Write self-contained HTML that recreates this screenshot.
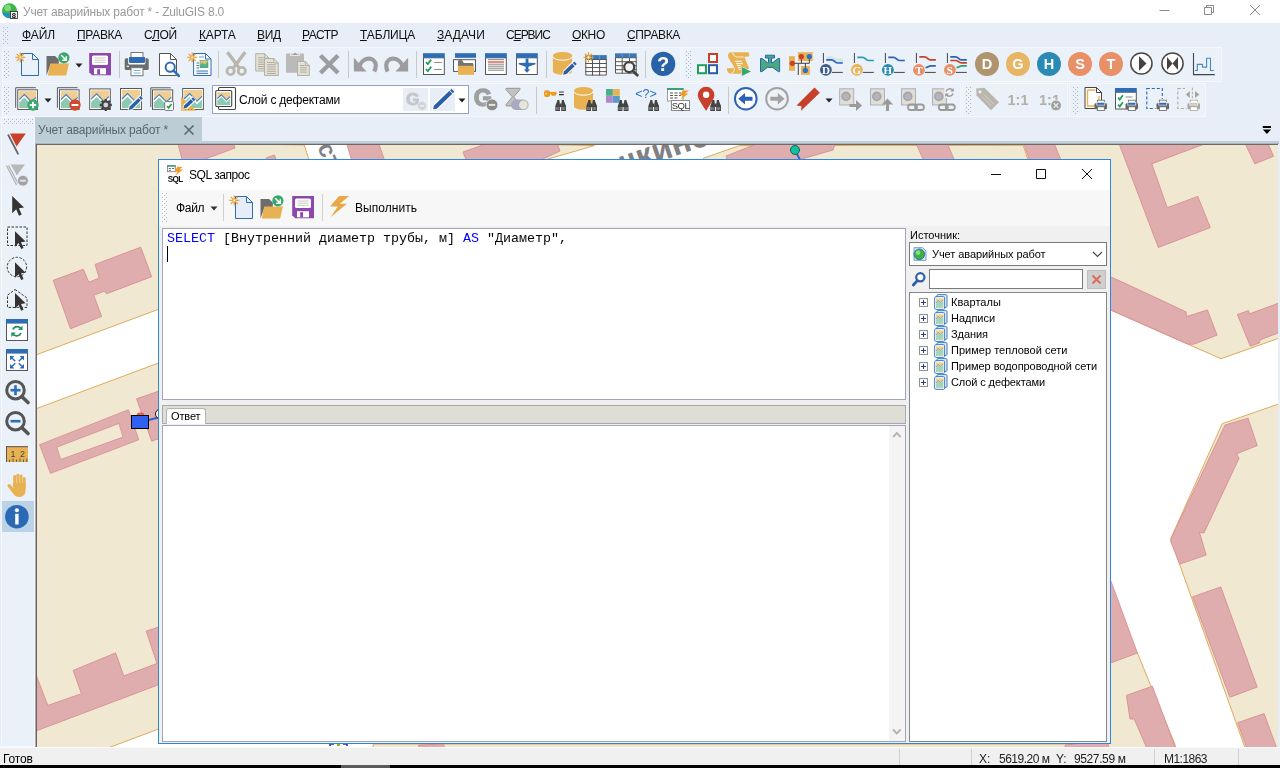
<!DOCTYPE html>
<html lang="ru"><head><meta charset="utf-8"><title>Учет аварийных работ * - ZuluGIS 8.0</title>
<style>
html,body{margin:0;padding:0;}
body{width:1280px;height:768px;overflow:hidden;position:relative;background:#e8eef7;font-family:"Liberation Sans",sans-serif;font-size:12px;color:#000;}
.a{position:absolute;}
.t{position:absolute;white-space:pre;line-height:16px;height:16px;will-change:transform;}
.panel{position:absolute;background:#ebf1f8;border:1px solid #f4f7fb;box-sizing:border-box;}
.grip{position:absolute;background-image:radial-gradient(circle at 0.5px 0.5px,#aeb7c3 0.55px,transparent 0.75px),radial-gradient(circle at 0.5px 0.5px,#aeb7c3 0.55px,transparent 0.75px);background-size:4px 4px,4px 4px;background-position:0 0,2px 2px;}
.sep{position:absolute;width:1px;background:#c8c8c6;}
.ic{position:absolute;width:24px;height:24px;overflow:visible;will-change:transform;}
.mono{font-family:"Liberation Mono",monospace;font-size:13.33px;}
.ms{font-family:"Liberation Sans",sans-serif;font-size:11px;}
u{text-decoration:underline;text-underline-offset:1px;}
</style></head>
<body>
<div class="a" style="left:0;top:0;width:1280px;height:23px;background:#fff"></div>
<svg class="ic" style="left:2px;top:3px;width:16px;height:16px" viewBox="0 0 24 24"><circle cx="11.300" cy="11.500" r="11.200" fill="#3cb44a"/><path d="M0.300 13a11.200 11.200 0 0 0 13 9.600v-7.600q-6 2-13-2z" fill="#2a8ad0"/><circle cx="8.500" cy="7.500" r="5" fill="#9ae88a" opacity="0.700"/><rect x="12.700" y="12.700" width="10.600" height="10.600" fill="#f4f4f4" stroke="#333" stroke-width="1.300"/><text x="18" y="22.300" text-anchor="middle" font-family="Liberation Sans, sans-serif" font-weight="bold" font-size="11.500" fill="#111">8</text></svg>
<div class="t " style="left:23px;top:3.5px;letter-spacing:-0.196px;color:#999;">Учет аварийных работ * - ZuluGIS 8.0</div>
<svg class="a" style="left:1150px;top:0" width="130" height="23" viewBox="0 0 130 23"><g fill="none" stroke="#8a8a8a" stroke-width="1"><path d="M9.500 10.500h10"/><path d="M54.500 7.500h7v7h-7z M56.500 7.500v-2h7v7h-2"/><path d="M100 5l10 10M110 5l-10 10"/></g></svg>
<div class="a" style="left:0;top:23px;width:1280px;height:24px;background:#e8eef7"></div>
<div class="grip" style="left:3px;top:27px;width:5px;height:17px"></div>
<div class="t " style="left:22.0px;top:26.5px;letter-spacing:-0.044px;color:#111;"><u>Ф</u>АЙЛ</div>
<div class="t " style="left:76.8px;top:26.5px;letter-spacing:-0.305px;color:#111;"><u>П</u>РАВКА</div>
<div class="t " style="left:144.3px;top:26.5px;letter-spacing:-0.302px;color:#111;">С<u>Л</u>ОЙ</div>
<div class="t " style="left:198.5px;top:26.5px;letter-spacing:-0.141px;color:#111;"><u>К</u>АРТА</div>
<div class="t " style="left:256.8px;top:26.5px;letter-spacing:-0.289px;color:#111;"><u>В</u>ИД</div>
<div class="t " style="left:301.8px;top:26.5px;letter-spacing:-0.509px;color:#111;"><u>Р</u>АСТР</div>
<div class="t " style="left:359.7px;top:26.5px;letter-spacing:-0.143px;color:#111;"><u>Т</u>АБЛИЦА</div>
<div class="t " style="left:436.5px;top:26.5px;letter-spacing:0.055px;color:#111;"><u>З</u>АДАЧИ</div>
<div class="t " style="left:506.0px;top:26.5px;letter-spacing:-1.028px;color:#111;">С<u>Е</u>РВИС</div>
<div class="t " style="left:571.8px;top:26.5px;letter-spacing:-0.357px;color:#111;"><u>О</u>КНО</div>
<div class="t " style="left:626.9px;top:26.5px;letter-spacing:-0.371px;color:#111;"><u>С</u>ПРАВКА</div>
<div class="panel" style="left:2px;top:47px;width:679px;height:35px"></div>
<div class="panel" style="left:682px;top:47px;width:540px;height:35px"></div>
<div class="panel" style="left:2px;top:83px;width:959px;height:34px"></div>
<div class="panel" style="left:962px;top:83px;width:106px;height:34px"></div>
<div class="panel" style="left:1069px;top:83px;width:137px;height:34px"></div>
<div class="grip" style="left:4px;top:51px;width:5px;height:27px"></div>
<div class="grip" style="left:686px;top:51px;width:5px;height:27px"></div>
<div class="grip" style="left:4px;top:87px;width:5px;height:27px"></div>
<div class="grip" style="left:966px;top:87px;width:5px;height:27px"></div>
<div class="grip" style="left:1073px;top:87px;width:5px;height:27px"></div>
<svg class="ic" style="left:15px;top:52px;width:24px;height:24px" viewBox="0 0 24 24"><path d="M6.5 1.5H17.5L23.5 7.5V23.5H6.5Z" fill="none" stroke="#2e6db4" stroke-width="1" stroke-linejoin="round"/><path d="M17.5 1.5V7.5H23.5" fill="none" stroke="#2e6db4" stroke-width="1"/><path d="M0.30 5.40L10.30 5.40M1.76 1.86L8.84 8.94M5.30 0.40L5.30 10.40M8.84 1.86L1.76 8.94" stroke="#eba53a" stroke-width="1.3" fill="none"/><circle cx="5.3" cy="5.4" r="1.300" fill="#fff" stroke="#eba53a" stroke-width="0.800"/></svg>
<svg class="ic" style="left:46px;top:52px;width:24px;height:24px" viewBox="0 0 24 24"><path d="M0.500 4h8.500l3.800 3.500v4.500h-8l-4.300 11.500z" fill="#6d6d6d"/><path d="M4.300 11.500h18.600l-2.700 12.100h-18.400z" fill="#e8b252"/><circle cx="17.900" cy="5.800" r="5.600" fill="#3aa76d"/><path d="M15.300 3.300l4.600 4.600M20.300 4.300v4h-4" stroke="#fff" stroke-width="1.500" fill="none"/></svg>
<svg class="ic" style="left:87px;top:52px;width:24px;height:24px" viewBox="0 0 24 24"><path d="M2.200 1h21.800v22.200h-18.800l-3-3z" fill="#8d48ac"/><rect x="5" y="3.500" width="16" height="9.500" rx="1.500" fill="#fff"/><path d="M7.500 6h11M7.500 8.200h11M7.500 10.400h11" stroke="#c4c2b8" stroke-width="0.900"/><path d="M7 16.200h12v6.100h-12z" fill="#fff"/><rect x="10.200" y="17.200" width="2.800" height="5.100" fill="#8d48ac"/></svg>
<svg class="ic" style="left:124px;top:52px;width:24px;height:24px" viewBox="0 0 24 24"><rect x="0.700" y="6.300" width="24" height="11.800" rx="1.500" fill="#6b6d6d"/><rect x="7" y="0.500" width="12" height="6" fill="#fff" stroke="#777" stroke-width="1"/><path d="M4.200 5h17.200v6a1.500 1.500 0 0 1-1.500 1.500h-14.200a1.500 1.500 0 0 1-1.500-1.500z" fill="#fff"/><path d="M5 5h16v4.500a1.500 1.500 0 0 1-1.500 1.500h-13a1.500 1.500 0 0 1-1.500-1.500z" fill="#2e6db4"/><rect x="2.500" y="13.800" width="2.500" height="1" fill="#fff"/><rect x="7" y="15.700" width="12" height="8" fill="#fff" stroke="#777" stroke-width="1"/><path d="M9.500 18.500h7M9.500 21h7" stroke="#7ab4dc" stroke-width="1"/></svg>
<svg class="ic" style="left:156px;top:52px;width:24px;height:24px" viewBox="0 0 24 24"><path d="M3.5 1.5H14.5L20.5 7.5V23.5H3.5Z" fill="#fff" stroke="#555" stroke-width="1" stroke-linejoin="round"/><path d="M14.5 1.5V7.5H20.5" fill="none" stroke="#555" stroke-width="1"/><circle cx="14.200" cy="15.200" r="4.600" fill="#fff" stroke="#2e6db4" stroke-width="2"/><path d="M17.600 18.600l5.200 5.200" stroke="#2e6db4" stroke-width="2.600" stroke-linecap="round"/></svg>
<svg class="ic" style="left:188px;top:52px;width:24px;height:24px" viewBox="0 0 24 24"><path d="M5.6 1.5H17.5L23 7.0V23.5H5.6Z" fill="#fff" stroke="#2e6db4" stroke-width="1" stroke-linejoin="round"/><path d="M17.5 1.5V7.0H23" fill="none" stroke="#2e6db4" stroke-width="1"/><path d="M11 5h5" stroke="#9cc4ea" stroke-width="1.600"/><rect x="12" y="8.200" width="8" height="7.500" fill="#f0c070"/><path d="M12 13l2.500-2.500 2 2 3.500-3v6.200h-8z" fill="#5ab08a"/><rect x="12" y="8.200" width="8" height="7.500" fill="none" stroke="#3aa76d" stroke-width="0.600"/><path d="M8.500 11h2.500M8.500 13.500h2.500M8.500 16h2.500M8.500 19h11.500M8.500 21.300h11.500" stroke="#2e6db4" stroke-width="1"/><path d="M-0.80 5.40L9.20 5.40M0.66 1.86L7.74 8.94M4.20 0.40L4.20 10.40M7.74 1.86L0.66 8.94" stroke="#eba53a" stroke-width="1.3" fill="none"/><circle cx="4.2" cy="5.4" r="1.300" fill="#fff" stroke="#eba53a" stroke-width="0.800"/></svg>
<svg class="ic" style="left:223px;top:52px;width:24px;height:24px" viewBox="0 0 24 24"><path d="M4.300 0.300L17 17M22.300 0.300L9.500 17" stroke="#b9b7ae" stroke-width="3.200" fill="none"/><path d="M4.300 0.300l2.400 0 8.500 12-2.300 2.500zM22.300 0.300l-2.400 0-8.500 12 2.300 2.500z" fill="#b9b7ae"/><circle cx="7.600" cy="19" r="3.600" fill="none" stroke="#b9b7ae" stroke-width="2.800"/><circle cx="18.800" cy="19" r="3.600" fill="none" stroke="#b9b7ae" stroke-width="2.800"/></svg>
<svg class="ic" style="left:254px;top:52px;width:24px;height:24px" viewBox="0 0 24 24"><path d="M1.7 1.7H10.7L15.2 6.2V19H1.7Z" fill="#e3e1d6" stroke="#b3b0a6" stroke-width="1" stroke-linejoin="round"/><path d="M10.7 1.7V6.2H15.2" fill="none" stroke="#b3b0a6" stroke-width="1"/><path d="M4.2 5.7H9.7M4.2 7.9H12.7M4.2 10.1H12.7M4.2 12.3H12.7M4.2 14.5H12.7M4.2 16.7H12.7" stroke="#aeaba0" stroke-width="1"/><path d="M10.5 6.5H19.8L24.3 11.0V23.5H10.5Z" fill="#e3e1d6" stroke="#b3b0a6" stroke-width="1" stroke-linejoin="round"/><path d="M19.8 6.5V11.0H24.3" fill="none" stroke="#b3b0a6" stroke-width="1"/><path d="M13.0 10.5H18.8M13.0 12.7H21.8M13.0 14.9H21.8M13.0 17.1H21.8M13.0 19.3H21.8M13.0 21.5H21.8" stroke="#aeaba0" stroke-width="1"/></svg>
<svg class="ic" style="left:285px;top:52px;width:24px;height:24px" viewBox="0 0 24 24"><rect x="1" y="1.500" width="18" height="19.300" rx="1" fill="#bababa"/><path d="M5.500 3.500h9v-1.500h-2.300a2.200 1.800 0 0 0-4.400 0h-2.300z" fill="#a5a49c" stroke="#fff" stroke-width="0.700"/><path d="M12.5 9.5H20.3L24.3 13.5V23.5H12.5Z" fill="#e3e1d6" stroke="#b3b0a6" stroke-width="1" stroke-linejoin="round"/><path d="M20.3 9.5V13.5H24.3" fill="none" stroke="#b3b0a6" stroke-width="1"/><path d="M15.0 13.5H19.3M15.0 15.7H21.8M15.0 17.9H21.8M15.0 20.1H21.8" stroke="#aeaba0" stroke-width="1"/></svg>
<svg class="ic" style="left:316px;top:52px;width:24px;height:24px" viewBox="0 0 24 24"><path d="M4.500 3.500L22 21M22 3.500L4.500 21" stroke="#9d9ca1" stroke-width="4.400" fill="none"/></svg>
<svg class="ic" style="left:353px;top:52px;width:24px;height:24px" viewBox="0 0 24 24"><path d="M0.900 5.800V19.400H13.500Z" fill="#9d9ca1"/><path d="M6.500 14.500C9 4.500 22.500 4 22.800 13.500C22.800 16 22 18 21.300 19.500" fill="none" stroke="#9d9ca1" stroke-width="4.200"/></svg>
<svg class="ic" style="left:385px;top:52px;width:24px;height:24px" viewBox="0 0 24 24"><g transform="translate(24,0) scale(-1,1)"><path d="M0.900 5.800V19.400H13.500Z" fill="#9d9ca1"/><path d="M6.500 14.500C9 4.500 22.500 4 22.800 13.500C22.800 16 22 18 21.300 19.500" fill="none" stroke="#9d9ca1" stroke-width="4.200"/></g></svg>
<svg class="ic" style="left:421px;top:52px;width:24px;height:24px" viewBox="0 0 24 24"><rect x="2.5" y="5.8" width="20.8" height="16.700000000000003" fill="#fff" stroke="#555" stroke-width="1"/><rect x="2" y="1.2" width="21.8" height="4.6" fill="#2e6db4"/><path d="M5.00 10.20l1.80 2.00l3.40 -4.60" fill="none" stroke="#1f9f5c" stroke-width="1.8"/><path d="M5.00 17.20l1.80 2.00l3.40 -4.60" fill="none" stroke="#1f9f5c" stroke-width="1.8"/><path d="M13.200 10.500h7.500M13.200 17.500h7.500" stroke="#8a8a8a" stroke-width="1"/></svg>
<svg class="ic" style="left:452px;top:52px;width:24px;height:24px" viewBox="0 0 24 24"><rect x="3" y="1.200" width="21" height="4.600" fill="#2e6db4"/><rect x="1.500" y="7.700" width="22" height="11.700" fill="#fff" stroke="#555" stroke-width="1"/><path d="M6 14V9.500q0-1.500 1.500-1.500h1.500q1.200 0 1.800 1.200l1 1.800h8.500q1.200 0 1.200 1.200v2z" fill="#75756f"/><rect x="6" y="13.800" width="16" height="9" fill="#e8b252"/></svg>
<svg class="ic" style="left:483px;top:52px;width:24px;height:24px" viewBox="0 0 24 24"><rect x="2.5" y="5.8" width="20.8" height="16.700000000000003" fill="#fff" stroke="#555" stroke-width="1"/><rect x="2" y="1.2" width="21.8" height="4.6" fill="#2e6db4"/><path d="M5 7.700h16M5 12.200h16M5 14.200h16M5 16.200h16M5 18.200h16" stroke="#777" stroke-width="0.900"/><path d="M5 10h16" stroke="#d0402a" stroke-width="1.200"/></svg>
<svg class="ic" style="left:514px;top:52px;width:24px;height:24px" viewBox="0 0 24 24"><rect x="2.5" y="5.8" width="20.8" height="16.700000000000003" fill="#fff" stroke="#555" stroke-width="1"/><rect x="2" y="1.2" width="21.8" height="4.6" fill="#2e6db4"/><path d="M11.600 6.500h2.800v4.200l7 0.300v1.200l-7 2.500v2.800h1.800l-3.200 3.300l-3.200-3.300h1.800v-2.800l-7-2.500v-1.200l7-0.300z" fill="#2e6db4"/></svg>
<svg class="ic" style="left:551px;top:52px;width:24px;height:24px" viewBox="0 0 24 24"><path d="M1.9 3.6V19.2a9.600000000000001 3.6 0 0 0 19.200000000000003 0V3.6a9.600000000000001 3.6 0 0 0 -19.200000000000003 0z" fill="#e8b252"/><path d="M1.9 4.6a9.600000000000001 3.6 0 0 0 19.200000000000003 0" fill="none" stroke="#fff" stroke-width="1"/><path d="M10.91 23.83L16.39 22.77L27.03 12.63L22.89 8.28L12.25 18.42Z" fill="#fff" opacity="0.85"/><path d="M12.00 22.80L15.56 21.90L23.67 14.17L21.19 11.57L13.08 19.29Z" fill="#2a5fa8"/><path d="M24.25 13.62L25.84 12.10L23.36 9.50L21.77 11.01Z" fill="#2a5fa8"/></svg>
<svg class="ic" style="left:583px;top:52px;width:24px;height:24px" viewBox="0 0 24 24"><rect x="2.3" y="3.1" width="21.5" height="20.5" fill="#fff"/><rect x="2.3" y="3.1" width="21.5" height="4.4" fill="#3a78bc"/><path d="M2.8 7.5V23.1H23.3V7.5M9.5 7.5V23.6M16.6 7.5V23.6M2.3 7.5H23.8M2.3 11.5H23.8M2.3 15.6H23.8M2.3 19.6H23.8" fill="none" stroke="#555" stroke-width="1"/><path d="M9.5 3.1V7.5M16.6 3.1V7.5" stroke="#6a9fd8" stroke-width="0.800"/><path d="M0.50 5.30L10.50 5.30M1.96 1.76L9.04 8.84M5.50 0.30L5.50 10.30M9.04 1.76L1.96 8.84" stroke="#eba53a" stroke-width="1.3" fill="none"/><circle cx="5.5" cy="5.3" r="1.300" fill="#fff" stroke="#eba53a" stroke-width="0.800"/></svg>
<svg class="ic" style="left:614px;top:52px;width:24px;height:24px" viewBox="0 0 24 24"><rect x="1" y="1.3" width="21.7" height="20.4" fill="#fff"/><rect x="1" y="1.3" width="21.7" height="4.4" fill="#3a78bc"/><path d="M1.5 5.7V21.2H22.2V5.7M8.2 5.7V21.7M15.5 5.7V21.7M1 5.7H22.7M1 9.7H22.7M1 13.7H22.7M1 17.7H22.7" fill="none" stroke="#555" stroke-width="1"/><path d="M8.2 1.3V5.7M15.5 1.3V5.7" stroke="#6a9fd8" stroke-width="0.800"/><circle cx="15.200" cy="15.100" r="5" fill="#f4f4f4" stroke="#444" stroke-width="2.200"/><path d="M19 19l4.300 4.300" stroke="#444" stroke-width="2.800" stroke-linecap="round"/></svg>
<svg class="ic" style="left:650px;top:52px;width:24px;height:24px" viewBox="0 0 24 24"><circle cx="13.200" cy="11.900" r="12.100" fill="#2a62a8"/><text x="13.200" y="19" text-anchor="middle" font-family="Liberation Sans, sans-serif" font-weight="bold" font-size="20" fill="#fff">?</text></svg>
<svg class="ic" style="left:695px;top:52px;width:24px;height:24px" viewBox="0 0 24 24"><rect x="14" y="2" width="8" height="8" fill="#fff" stroke="#c8402a" stroke-width="2"/><rect x="3" y="13.200" width="8" height="8" fill="#fff" stroke="#1f9f5c" stroke-width="2"/><rect x="14" y="13.200" width="8" height="8" fill="#fff" stroke="#2a5fa8" stroke-width="2"/></svg>
<svg class="ic" style="left:726px;top:52px;width:24px;height:24px" viewBox="0 0 24 24"><path d="M4.500 0.300H21.500Q23.400 0.300 23.200 2.500L23.100 4.600L18.300 4.800L23.100 16.200L14.500 21.700H5.600Q1.200 21.700 1 17.300V16.200H8.750L2.300 5.500Q1.200 1 4.500 0.300Z" fill="#e8b252"/><path d="M6.100 0.300Q8 4.800 10.500 5H17.800M8.750 16.400Q8 20.500 5.300 21.600" fill="none" stroke="#fff" stroke-width="0.800"/><path d="M9 9.300h7M10 11.700h7M11.100 13.600h3.500M12 15.600h2.500M12.500 17.500h2" stroke="#fff" stroke-width="1"/><path d="M15.400 14.300l10.200 5.100l-10.200 5.100z" fill="#ebf1f8"/><path d="M15.900 15.100l9.100 4.300l-9.100 4.500z" fill="#3aa76d"/></svg>
<svg class="ic" style="left:757px;top:52px;width:24px;height:24px" viewBox="0 0 24 24"><path d="M3.500 6.500H5L10.400 10.500H15.800L21.200 6.500H22.600V19.600H21.200L15.800 15.400H10.400L5 19.600H3.500Z" fill="#4aaa7c" stroke="#2a62b8" stroke-width="1"/><path d="M8.500 3.200h9v2.800h-3v4.800h-3v-4.800h-3z" fill="#4aaa7c" stroke="#2a62b8" stroke-width="1"/><rect x="12.050" y="6" width="1.900" height="6" fill="#4aaa7c"/></svg>
<svg class="ic" style="left:788px;top:52px;width:24px;height:24px" viewBox="0 0 24 24"><rect x="1" y="4.200" width="6" height="14.600" fill="#e8b252"/><rect x="10" y="0.200" width="14.700" height="8.800" fill="#e8b252"/><rect x="13" y="14" width="8.800" height="8.800" fill="#e8b252"/><path d="M4.300 11.300H21.300V4.500M10.300 11.300V23M13.400 4.500V11.300M17.400 11.300V18.400" fill="none" stroke="#444" stroke-width="1"/><circle cx="4.300" cy="11.300" r="2.600" fill="#c8402a"/><circle cx="13.400" cy="4.500" r="2.600" fill="#c8402a"/><circle cx="21.300" cy="4.500" r="2.600" fill="#2a72c8"/><circle cx="17.400" cy="18.400" r="2.600" fill="#2a72c8"/></svg>
<svg class="ic" style="left:819px;top:52px;width:24px;height:24px" viewBox="0 0 24 24"><path d="M4.400 1V11M12.900 20.400H23.800" stroke="#444" stroke-width="1" fill="none"/><path d="M7.300 4.500H12.500C15.500 4.500 15.500 6.500 18.500 6.500H23.800V10H18.500C15.500 10 15.500 7 12.500 7H7.300Z" fill="#cfe6e4"/><path d="M7.300 7.9H12.500C15.500 7.9 15.500 11 18.500 11H23.800" fill="none" stroke="#2a62b8" stroke-width="1.700"/><circle cx="6.900" cy="17.900" r="5.900" fill="#3f5d8c"/><text x="6.900" y="21.800" text-anchor="middle" font-family="Liberation Serif, serif" font-weight="bold" font-size="11" fill="#fff">D</text></svg>
<svg class="ic" style="left:850px;top:52px;width:24px;height:24px" viewBox="0 0 24 24"><path d="M4.400 1V11M12.900 20.400H23.800" stroke="#444" stroke-width="1" fill="none"/><path d="M7.300 5.4H12.500C15.500 5.4 15.500 8.5 18.500 8.5H23.800" fill="none" stroke="#2a9ab8" stroke-width="1.700"/><circle cx="6.900" cy="17.900" r="5.900" fill="#e8b259"/><text x="6.900" y="21.800" text-anchor="middle" font-family="Liberation Serif, serif" font-weight="bold" font-size="11" fill="#fff">G</text></svg>
<svg class="ic" style="left:881px;top:52px;width:24px;height:24px" viewBox="0 0 24 24"><path d="M4.400 1V11M12.900 20.400H23.800" stroke="#444" stroke-width="1" fill="none"/><path d="M7.300 5.4H12.500C15.500 5.4 15.500 8.5 18.500 8.5H23.800" fill="none" stroke="#2a62b8" stroke-width="1.700"/><circle cx="6.900" cy="17.900" r="5.900" fill="#2a8ab0"/><text x="6.900" y="21.800" text-anchor="middle" font-family="Liberation Serif, serif" font-weight="bold" font-size="11" fill="#fff">H</text></svg>
<svg class="ic" style="left:912px;top:52px;width:24px;height:24px" viewBox="0 0 24 24"><path d="M4.400 1V11M12.900 20.400H23.800" stroke="#444" stroke-width="1" fill="none"/><path d="M13.500 15.500C16 15.500 16.500 13.800 19 13.800H23.800" fill="none" stroke="#2a62b8" stroke-width="1.700"/><path d="M7.300 4.8H12.500C15.500 4.8 15.500 7.9 18.500 7.9H23.800" fill="none" stroke="#c8402a" stroke-width="1.700"/><circle cx="6.900" cy="17.900" r="5.900" fill="#e8906a"/><text x="6.900" y="21.800" text-anchor="middle" font-family="Liberation Serif, serif" font-weight="bold" font-size="11" fill="#fff">T</text></svg>
<svg class="ic" style="left:943px;top:52px;width:24px;height:24px" viewBox="0 0 24 24"><path d="M4.400 1V11M12.900 20.400H23.800" stroke="#444" stroke-width="1" fill="none"/><path d="M13.500 15.500C16 15.500 16.500 13.800 19 13.800H23.800" fill="none" stroke="#2aa06a" stroke-width="1.700"/><path d="M7.300 4.8H12.500C15.500 4.8 15.500 7.9 18.500 7.9H23.800" fill="none" stroke="#2a62b8" stroke-width="1.700"/><path d="M7.300 8.5H12.500C15.500 8.5 15.500 10.8 18.500 10.8H23.800" fill="none" stroke="#c8402a" stroke-width="1.700"/><circle cx="6.900" cy="17.900" r="5.900" fill="#e8906a"/><text x="6.900" y="21.800" text-anchor="middle" font-family="Liberation Serif, serif" font-weight="bold" font-size="11" fill="#fff">S</text></svg>
<svg class="ic" style="left:975px;top:52px;width:24px;height:24px" viewBox="0 0 24 24"><circle cx="12" cy="12" r="12" fill="#b0946e"/><text x="12" y="17" text-anchor="middle" font-family="Liberation Sans, sans-serif" font-weight="bold" font-size="14.500" fill="#fff">D</text></svg>
<svg class="ic" style="left:1006px;top:52px;width:24px;height:24px" viewBox="0 0 24 24"><circle cx="12" cy="12" r="12" fill="#e8b565"/><text x="12" y="17" text-anchor="middle" font-family="Liberation Sans, sans-serif" font-weight="bold" font-size="14.500" fill="#fff">G</text></svg>
<svg class="ic" style="left:1037px;top:52px;width:24px;height:24px" viewBox="0 0 24 24"><circle cx="12" cy="12" r="12" fill="#2a8ab5"/><text x="12" y="17" text-anchor="middle" font-family="Liberation Sans, sans-serif" font-weight="bold" font-size="14.500" fill="#fff">H</text></svg>
<svg class="ic" style="left:1068px;top:52px;width:24px;height:24px" viewBox="0 0 24 24"><circle cx="12" cy="12" r="12" fill="#e89068"/><text x="12" y="17" text-anchor="middle" font-family="Liberation Sans, sans-serif" font-weight="bold" font-size="14.500" fill="#fff">S</text></svg>
<svg class="ic" style="left:1099px;top:52px;width:24px;height:24px" viewBox="0 0 24 24"><circle cx="12" cy="12" r="12" fill="#e89068"/><text x="12" y="17" text-anchor="middle" font-family="Liberation Sans, sans-serif" font-weight="bold" font-size="14.500" fill="#fff">T</text></svg>
<svg class="ic" style="left:1129px;top:52px;width:24px;height:24px" viewBox="0 0 24 24"><circle cx="12.400" cy="11.500" r="10.600" fill="#fff" stroke="#4a4644" stroke-width="1.500"/><path d="M10 4.200L17.500 11.500L10 18.700z" fill="#444"/></svg>
<svg class="ic" style="left:1160px;top:52px;width:24px;height:24px" viewBox="0 0 24 24"><circle cx="12.500" cy="11.500" r="10.600" fill="#fff" stroke="#4a4644" stroke-width="1.500"/><path d="M7 5V17.900L12.500 11.500zM18 5V17.900L12.500 11.500z" fill="#444"/></svg>
<svg class="ic" style="left:1191px;top:52px;width:24px;height:24px" viewBox="0 0 24 24"><path d="M2.500 1V22.600H23.800" fill="none" stroke="#444" stroke-width="1.100"/><path d="M3.900 18.500H6.300V12.400H11.500V15.100H15.600V6.300H19.500V18.500H23" fill="none" stroke="#4a8ac0" stroke-width="1.100"/></svg>
<svg class="ic" style="left:15px;top:87px;width:24px;height:24px" viewBox="0 0 24 24"><path d="M0.7 20.8V0.7H20.8" fill="none" stroke="#5a5a5a" stroke-width="1"/><rect x="2.8" y="2.8" width="19.599999999999998" height="19.7" fill="#fff" stroke="#5a5a5a" stroke-width="1"/><rect x="4.199999999999999" y="4.199999999999999" width="16.8" height="16.900000000000002" fill="#f0cd90"/><path d="M4.199999999999999 12.99L9.41 7.92L16.3 15.02L21.0 10.62V21.1H4.199999999999999Z" fill="#fff"/><path d="M4.199999999999999 12.65L9.41 7.58L16.3 14.68L21.0 10.28" fill="none" stroke="#3f7fc4" stroke-width="1.100"/><path d="M4.199999999999999 15.52L9.41 10.45L16.3 17.55L21.0 13.16V21.1H4.199999999999999Z" fill="#8ecab2"/><circle cx="18" cy="18" r="5.700" fill="#3aa76d"/><path d="M14.800 18h6.400M18 14.800v6.400" stroke="#fff" stroke-width="1.800"/></svg>
<svg class="ic" style="left:56px;top:87px;width:24px;height:24px" viewBox="0 0 24 24"><path d="M1.4 20.8V0.7H21.5" fill="none" stroke="#5a5a5a" stroke-width="1"/><rect x="3.5" y="2.8" width="19.6" height="19.7" fill="#fff" stroke="#5a5a5a" stroke-width="1"/><rect x="4.9" y="4.199999999999999" width="16.800000000000004" height="16.900000000000002" fill="#f0cd90"/><path d="M4.9 12.99L10.11 7.92L17.0 15.02L21.700000000000003 10.62V21.1H4.9Z" fill="#fff"/><path d="M4.9 12.65L10.11 7.58L17.0 14.68L21.700000000000003 10.28" fill="none" stroke="#3f7fc4" stroke-width="1.100"/><path d="M4.9 15.52L10.11 10.45L17.0 17.55L21.700000000000003 13.16V21.1H4.9Z" fill="#8ecab2"/><circle cx="19" cy="18" r="5.700" fill="#d24a30"/><path d="M15.600 18h6.800" stroke="#fff" stroke-width="2"/></svg>
<svg class="ic" style="left:87px;top:87px;width:24px;height:24px" viewBox="0 0 24 24"><rect x="2.7" y="1.9" width="20.6" height="20.6" fill="#fff" stroke="#5a5a5a" stroke-width="1"/><rect x="4.1" y="3.3" width="17.800000000000004" height="17.8" fill="#f0cd90"/><path d="M4.1 12.56L9.62 7.22L16.92 14.69L21.900000000000002 10.06V21.1H4.1Z" fill="#fff"/><path d="M4.1 12.2L9.62 6.86L16.92 14.34L21.900000000000002 9.71" fill="none" stroke="#3f7fc4" stroke-width="1.100"/><path d="M4.1 15.23L9.62 9.89L16.92 17.36L21.900000000000002 12.73V21.1H4.1Z" fill="#8ecab2"/><path d="M21.30 18.00L24.80 18.00M20.57 19.77L23.04 22.24M18.80 20.50L18.80 24.00M17.03 19.77L14.56 22.24M16.30 18.00L12.80 18.00M17.03 16.23L14.56 13.76M18.80 15.50L18.80 12.00M20.57 16.23L23.04 13.76" stroke="#444" stroke-width="2.300"/><circle cx="18.8" cy="18" r="3.400" fill="#ccd4dc" stroke="#444" stroke-width="2"/></svg>
<svg class="ic" style="left:118px;top:87px;width:24px;height:24px" viewBox="0 0 24 24"><rect x="2.5" y="1.5" width="21" height="21" fill="#fff" stroke="#5a5a5a" stroke-width="1"/><rect x="3.9" y="2.9" width="18.200000000000003" height="18.200000000000003" fill="#f0cd90"/><path d="M3.9 12.36L9.54 6.9L17.0 14.55L22.1 9.82V21.1H3.9Z" fill="#fff"/><path d="M3.9 12.0L9.54 6.54L17.0 14.18L22.1 9.45" fill="none" stroke="#3f7fc4" stroke-width="1.100"/><path d="M3.9 15.09L9.54 9.63L17.0 17.28L22.1 12.55V21.1H3.9Z" fill="#8ecab2"/><path d="M9.52 23.94L14.92 22.77L26.07 12.04L22.05 7.86L10.90 18.59Z" fill="#fff" opacity="0.85"/><path d="M10.60 22.90L14.08 21.91L22.72 13.60L20.36 11.15L11.73 19.46Z" fill="#2a5fa8"/><path d="M23.29 13.05L24.88 11.53L22.52 9.07L20.94 10.60Z" fill="#2a5fa8"/></svg>
<svg class="ic" style="left:149px;top:87px;width:24px;height:24px" viewBox="0 0 24 24"><path d="M1.8 20V0.8H21.7" fill="none" stroke="#5a5a5a" stroke-width="1"/><rect x="3.5" y="2.9" width="20.2" height="19.5" fill="#fff" stroke="#5a5a5a" stroke-width="1"/><rect x="4.9" y="4.3" width="17.4" height="16.7" fill="#f0cd90"/><path d="M4.9 12.98L10.29 7.97L17.43 14.99L22.3 10.65V21.0H4.9Z" fill="#fff"/><path d="M4.9 12.65L10.29 7.64L17.43 14.65L22.3 10.31" fill="none" stroke="#3f7fc4" stroke-width="1.100"/><path d="M4.9 15.49L10.29 10.48L17.43 17.49L22.3 13.15V21.0H4.9Z" fill="#8ecab2"/><rect x="15.700" y="14.600" width="8.800" height="8.800" rx="1" fill="#fff" stroke="#777" stroke-width="1"/><path d="M18.09 19.17l1.53 1.70l2.89 -3.91" fill="none" stroke="#1f9f5c" stroke-width="1.7"/></svg>
<svg class="ic" style="left:180px;top:87px;width:24px;height:24px" viewBox="0 0 24 24"><rect x="2.7" y="1.5" width="20.7" height="21" fill="#fff" stroke="#5a5a5a" stroke-width="1"/><rect x="4.1" y="2.9" width="17.9" height="18.200000000000003" fill="#f0cd90"/><path d="M4.1 12.36L9.65 6.9L16.99 14.55L22.0 9.82V21.1H4.1Z" fill="#fff"/><path d="M4.1 12.0L9.65 6.54L16.99 14.18L22.0 9.45" fill="none" stroke="#3f7fc4" stroke-width="1.100"/><path d="M4.1 15.09L9.65 9.63L16.99 17.28L22.0 12.55V21.1H4.1Z" fill="#8ecab2"/><path d="M1.100 9.800V23.700H16.400Z" fill="#e8b252"/><path d="M5 22.500h1M8 22.500h1M11 22.500h1" stroke="#b88020" stroke-width="1"/><path d="M2.21 22.84L7.62 21.69L16.56 13.15L12.56 8.96L3.61 17.49Z" fill="#fff" opacity="0.85"/><path d="M3.30 21.80L6.79 20.82L13.20 14.70L10.86 12.24L4.44 18.36Z" fill="#2a5fa8"/><path d="M13.78 14.15L15.37 12.63L13.03 10.17L11.43 11.69Z" fill="#2a5fa8"/></svg>
<svg class="ic" style="left:473px;top:87px;width:24px;height:24px" viewBox="0 0 24 24"><text x="0.700" y="18.500" font-family="Liberation Sans, sans-serif" font-weight="bold" font-size="23.500" fill="#9ca0a0" stroke="#9ca0a0" stroke-width="1.300">G</text><circle cx="19" cy="17.900" r="5.900" fill="#8c8c8c" stroke="#e8eef7" stroke-width="0.800"/><path d="M15.800 17.900h6.400" stroke="#e8e6dc" stroke-width="2"/></svg>
<svg class="ic" style="left:504px;top:87px;width:24px;height:24px" viewBox="0 0 24 24"><path d="M2.100 1.300H16V2.600L9.700 9.900L16 17.500V18.900H2.100V17.500L8.400 9.900L2.100 2.600Z" fill="#c2c2c2" stroke="#8e8e8e" stroke-width="0.900"/><rect x="7" y="12.600" width="17.600" height="10.500" rx="5.250" fill="#a9a9c1"/><circle cx="19.400" cy="17.900" r="4.300" fill="#e8e6d8"/></svg>
<svg class="ic" style="left:541px;top:87px;width:24px;height:24px" viewBox="0 0 24 24"><rect x="3" y="3.300" width="6" height="6.600" rx="2.200" fill="#ec9a22"/><circle cx="5" cy="6.600" r="0.900" fill="#f8dcae"/><path d="M8.500 6.200H15.700M11.500 6.200V8.800M13.700 6.200V8.800" stroke="#ec9a22" stroke-width="2.200" fill="none"/><path d="M18 5h4.800M18 7.600h4.800" stroke="#333" stroke-width="1.100"/><g transform="translate(14,13)" fill="#444"><path d="M0.300 11V6L2 1.500h2.600L5 6v5z"/><path d="M6.200 11V6L6.600 1.500h2.600L11 6v5z"/><rect x="2.200" y="0" width="2.200" height="2"/><rect x="6.800" y="0" width="2.200" height="2"/><rect x="4.500" y="3.500" width="2.200" height="3.500"/><path d="M1.500 7v3M2.800 7v3M3.900 7v3M7.400 7v3M8.500 7v3M9.700 7v3" stroke="#e8eef7" stroke-width="0.350"/></g></svg>
<svg class="ic" style="left:572px;top:87px;width:24px;height:24px" viewBox="0 0 24 24"><path d="M2 3.6V19.2a9.5 3.6 0 0 0 19 0V3.6a9.5 3.6 0 0 0 -19 0z" fill="#e8b252"/><path d="M2 4.6a9.5 3.6 0 0 0 19 0" fill="none" stroke="#fff" stroke-width="1"/><rect x="13" y="12" width="12.500" height="12.500" fill="#ecf1f8" opacity="0"/><g transform="translate(14,13)" fill="#444"><path d="M0.300 11V6L2 1.500h2.600L5 6v5z"/><path d="M6.200 11V6L6.600 1.500h2.600L11 6v5z"/><rect x="2.200" y="0" width="2.200" height="2"/><rect x="6.800" y="0" width="2.200" height="2"/><rect x="4.500" y="3.500" width="2.200" height="3.500"/><path d="M1.500 7v3M2.800 7v3M3.900 7v3M7.400 7v3M8.500 7v3M9.700 7v3" stroke="#e8eef7" stroke-width="0.350"/></g></svg>
<svg class="ic" style="left:603px;top:87px;width:24px;height:24px" viewBox="0 0 24 24"><rect x="3" y="2" width="6.800" height="6.800" fill="#4aae8a"/><rect x="10" y="2" width="6.800" height="6.800" fill="#e8b259"/><rect x="3" y="9" width="6.800" height="6.800" fill="#b088cc"/><rect x="10" y="9" width="6.800" height="6.800" fill="#5a9ac8"/><g transform="translate(14.5,13)" fill="#444"><path d="M0.300 11V6L2 1.500h2.600L5 6v5z"/><path d="M6.200 11V6L6.600 1.500h2.600L11 6v5z"/><rect x="2.200" y="0" width="2.200" height="2"/><rect x="6.800" y="0" width="2.200" height="2"/><rect x="4.500" y="3.500" width="2.200" height="3.500"/><path d="M1.500 7v3M2.800 7v3M3.900 7v3M7.400 7v3M8.500 7v3M9.700 7v3" stroke="#e8eef7" stroke-width="0.350"/></g></svg>
<svg class="ic" style="left:634px;top:87px;width:24px;height:24px" viewBox="0 0 24 24"><text x="12" y="10.500" text-anchor="middle" font-family="Liberation Sans, sans-serif" font-size="12.500" fill="#2a72c0">&lt;?&gt;</text><g transform="translate(14,13)" fill="#444"><path d="M0.300 11V6L2 1.500h2.600L5 6v5z"/><path d="M6.200 11V6L6.600 1.500h2.600L11 6v5z"/><rect x="2.200" y="0" width="2.200" height="2"/><rect x="6.800" y="0" width="2.200" height="2"/><rect x="4.500" y="3.500" width="2.200" height="3.500"/><path d="M1.500 7v3M2.800 7v3M3.900 7v3M7.400 7v3M8.500 7v3M9.700 7v3" stroke="#e8eef7" stroke-width="0.350"/></g></svg>
<svg class="ic" style="left:665px;top:87px;width:24px;height:24px" viewBox="0 0 24 24"><rect x="2.500" y="1.500" width="15.500" height="12.500" fill="#fff" stroke="#9a9a9a" stroke-width="1"/><rect x="2" y="1" width="16.400" height="2" fill="#3aa078"/><path d="M5 6h3M9.500 6h3M5 8.500h3M9.500 8.500h3M5 11h3M9.500 11h3M14 6h2M14 8.500h2" stroke="#555" stroke-width="1.200"/><path d="M24 3.600h-6l-3.500 5h3.500l-2.500 4l8-6h-3.500z" fill="#f29a28"/><rect x="6.500" y="13.500" width="18" height="10" fill="#fff" stroke="#8a8a8a" stroke-width="1"/><text x="15.500" y="22" text-anchor="middle" font-family="Liberation Sans, sans-serif" font-size="9.500" fill="#333" letter-spacing="-0.500">SQL</text></svg>
<svg class="ic" style="left:696px;top:87px;width:24px;height:24px" viewBox="0 0 24 24"><path d="M10.100 23.900C4 14 1.800 11.500 1.800 8A8.300 8.300 0 0 1 18.400 8C18.400 11.500 16.200 14 10.100 23.900Z" fill="#c8402a"/><circle cx="10.100" cy="7.800" r="3.200" fill="#fff"/><g transform="translate(14,13)" fill="#444"><path d="M0.300 11V6L2 1.500h2.600L5 6v5z"/><path d="M6.200 11V6L6.600 1.500h2.600L11 6v5z"/><rect x="2.200" y="0" width="2.200" height="2"/><rect x="6.800" y="0" width="2.200" height="2"/><rect x="4.500" y="3.500" width="2.200" height="3.500"/><path d="M1.500 7v3M2.800 7v3M3.900 7v3M7.400 7v3M8.500 7v3M9.700 7v3" stroke="#e8eef7" stroke-width="0.350"/></g></svg>
<svg class="ic" style="left:733px;top:87px;width:24px;height:24px" viewBox="0 0 24 24"><circle cx="12.800" cy="11.700" r="10.800" fill="#fff" stroke="#2a62b8" stroke-width="2"/><path d="M5.200 11.700l6.800-5.700v3.700h7.500v4h-7.500v3.700z" fill="#2a62b8"/></svg>
<svg class="ic" style="left:764px;top:87px;width:24px;height:24px" viewBox="0 0 24 24"><circle cx="13" cy="11.700" r="10.800" fill="#eef2f8" stroke="#a2a2a2" stroke-width="2"/><path d="M20.600 11.700l-6.800-5.700v3.700h-7.500v4h7.500v3.700z" fill="#a2a2a2"/></svg>
<svg class="ic" style="left:796px;top:87px;width:24px;height:24px" viewBox="0 0 24 24"><path d="M18.500 0.400L23.800 5.800L9.500 19.500L5 23.700L5.500 19.300L0.500 18.400Z" fill="#c8402a"/></svg>
<svg class="ic" style="left:837px;top:87px;width:24px;height:24px" viewBox="0 0 24 24"><rect x="2.7" y="1.8" width="14" height="16.200" fill="#e2dfd2" stroke="#adadc6" stroke-width="1"/><circle cx="9.0" cy="9.4" r="4.800" fill="#a6a6ae"/><circle cx="9.0" cy="9.4" r="3" fill="#b4b4ba"/><path d="M12.500 17h6.500v-4l6 5.500l-6 5.500v-4h-6.500z" fill="#9a9a9a"/></svg>
<svg class="ic" style="left:868px;top:87px;width:24px;height:24px" viewBox="0 0 24 24"><rect x="2.5" y="1.8" width="14" height="16.200" fill="#e2dfd2" stroke="#adadc6" stroke-width="1"/><circle cx="8.8" cy="9.4" r="4.800" fill="#a6a6ae"/><circle cx="8.8" cy="9.4" r="3" fill="#b4b4ba"/><path d="M19.500 11.500l5.700 6h-4.200v6.500h-3v-6.500h-4.200z" fill="#9a9a9a"/></svg>
<svg class="ic" style="left:899px;top:87px;width:24px;height:24px" viewBox="0 0 24 24"><rect x="2.5" y="1.8" width="14" height="16.200" fill="#e2dfd2" stroke="#adadc6" stroke-width="1"/><circle cx="8.8" cy="9.4" r="4.800" fill="#a6a6ae"/><circle cx="8.8" cy="9.4" r="3" fill="#b4b4ba"/><g fill="none" stroke="#9a9a9a" stroke-width="1.800"><rect x="9" y="17.5" width="9" height="5.500" rx="2.750"/><rect x="16" y="17.5" width="9" height="5.500" rx="2.750"/></g></svg>
<svg class="ic" style="left:930px;top:87px;width:24px;height:24px" viewBox="0 0 24 24"><rect x="2.5" y="1.8" width="14" height="16.200" fill="#e2dfd2" stroke="#adadc6" stroke-width="1"/><circle cx="8.8" cy="9.4" r="4.800" fill="#a6a6ae"/><circle cx="8.8" cy="9.4" r="3" fill="#b4b4ba"/><rect x="14.200" y="0" width="10.500" height="11" fill="#ecf1f8"/><path d="M22.800 3.500a3.800 3.800 0 0 0-6.800 1M16.200 7.500a3.800 3.800 0 0 0 6.800-1" fill="none" stroke="#9a9a9a" stroke-width="1.400"/><path d="M23.800 1v3.500h-3.500zM15.200 10v-3.500h3.500z" fill="#9a9a9a"/><g fill="none" stroke="#9a9a9a" stroke-width="1.800"><rect x="8.8" y="17.5" width="9" height="5.500" rx="2.750"/><rect x="15.8" y="17.5" width="9" height="5.500" rx="2.750"/></g></svg>
<svg class="ic" style="left:975px;top:87px;width:24px;height:24px" viewBox="0 0 24 24"><path d="M1.200 1.500L1.500 8.500L16 23.200L24 15.200L9.500 0.800Z" fill="#b9b6ae"/><circle cx="5" cy="4.800" r="1.600" fill="#ecf1f8"/><path d="M9 7.500l9.500 9.500M7 9.500l9.500 9.500" stroke="#d2d0c8" stroke-width="1"/></svg>
<svg class="ic" style="left:1006px;top:87px;width:24px;height:24px" viewBox="0 0 24 24"><text x="12" y="18" text-anchor="middle" font-family="Liberation Sans, sans-serif" font-weight="bold" font-size="14.500" fill="#b3b0a8">1:1</text></svg>
<svg class="ic" style="left:1037px;top:87px;width:24px;height:24px" viewBox="0 0 24 24"><text x="12.500" y="18" text-anchor="middle" font-family="Liberation Sans, sans-serif" font-weight="bold" font-size="14.500" fill="#b3b0a8">1:1</text><circle cx="19" cy="18.400" r="5.300" fill="#9c9c9c" stroke="#ecf1f8" stroke-width="0.800"/><path d="M16.700 16.100l4.600 4.600M21.300 16.100l-4.600 4.600" stroke="#e4e2d8" stroke-width="1.500"/></svg>
<svg class="ic" style="left:1082px;top:87px;width:24px;height:24px" viewBox="0 0 24 24"><path d="M3 0.5H14.5L19.5 5.5V21.5H3Z" fill="#fff" stroke="#444" stroke-width="1" stroke-linejoin="round"/><path d="M14.5 0.5V5.5H19.5" fill="none" stroke="#444" stroke-width="1"/><path d="M5.500 3h8M5.500 3v16h8M17 9v5" fill="none" stroke="#e8b252" stroke-width="1.400"/><g transform="translate(12.5,12.8)"><rect x="0" y="3.500" width="12.500" height="6" rx="1" fill="#666"/><rect x="2.800" y="0.400" width="7" height="4" fill="#fff" stroke="#666" stroke-width="0.800"/><rect x="2.300" y="2.500" width="8" height="2.800" fill="#2e6db4" stroke="#fff" stroke-width="0.600"/><rect x="2.800" y="7" width="7" height="3.800" fill="#fff" stroke="#666" stroke-width="0.800"/></g></svg>
<svg class="ic" style="left:1113px;top:87px;width:24px;height:24px" viewBox="0 0 24 24"><rect x="2.5" y="5.2" width="20.8" height="16.8" fill="#fff" stroke="#555" stroke-width="1"/><rect x="2" y="1" width="21.8" height="4.2" fill="#2e6db4"/><path d="M5.16 10.68l1.62 1.80l3.06 -4.14" fill="none" stroke="#1f9f5c" stroke-width="1.8"/><path d="M5.16 17.68l1.62 1.80l3.06 -4.14" fill="none" stroke="#1f9f5c" stroke-width="1.8"/><path d="M12.500 10h7" stroke="#8a8a8a" stroke-width="1"/><g transform="translate(12.5,12.8)"><rect x="0" y="3.500" width="12.500" height="6" rx="1" fill="#666"/><rect x="2.800" y="0.400" width="7" height="4" fill="#fff" stroke="#666" stroke-width="0.800"/><rect x="2.300" y="2.500" width="8" height="2.800" fill="#2e6db4" stroke="#fff" stroke-width="0.600"/><rect x="2.800" y="7" width="7" height="3.800" fill="#fff" stroke="#666" stroke-width="0.800"/></g></svg>
<svg class="ic" style="left:1144px;top:87px;width:24px;height:24px" viewBox="0 0 24 24"><rect x="2.800" y="1.500" width="15.500" height="20" fill="none" stroke="#2a62b8" stroke-width="1.100" stroke-dasharray="3 2"/><rect x="11.500" y="12" width="14" height="12" fill="#ecf1f8"/><g transform="translate(12.5,12.8)"><rect x="0" y="3.500" width="12.500" height="6" rx="1" fill="#666"/><rect x="2.800" y="0.400" width="7" height="4" fill="#fff" stroke="#666" stroke-width="0.800"/><rect x="2.300" y="2.500" width="8" height="2.800" fill="#2e6db4" stroke="#fff" stroke-width="0.600"/><rect x="2.800" y="7" width="7" height="3.800" fill="#fff" stroke="#666" stroke-width="0.800"/></g></svg>
<svg class="ic" style="left:1175px;top:87px;width:24px;height:24px" viewBox="0 0 24 24"><rect x="2.800" y="1.500" width="15.500" height="20" fill="none" stroke="#a9a9a9" stroke-width="1.100" stroke-dasharray="3 2"/><rect x="11.500" y="12" width="14" height="12" fill="#ecf1f8"/><rect x="10" y="0" width="15" height="12" fill="#ecf1f8"/><path d="M17.400 0.700v11.300" stroke="#a9a9a9" stroke-width="1" stroke-dasharray="2.500 1.500"/><path d="M14.800 4v7l-4-3.500zM20 4v7l4.300-3.500z" fill="#a4a4a4"/><g transform="translate(12.5,12.8)"><rect x="0" y="3.500" width="12.500" height="6" rx="1" fill="#aaa89e"/><rect x="2.800" y="0.400" width="7" height="4" fill="#fff" stroke="#aaa89e" stroke-width="0.800"/><rect x="2.300" y="2.500" width="8" height="2.800" fill="#c9c7bc" stroke="#fff" stroke-width="0.600"/><rect x="2.800" y="7" width="7" height="3.800" fill="#fff" stroke="#aaa89e" stroke-width="0.800"/></g></svg>
<svg class="a" style="left:74.5px;top:63px" width="8" height="5" viewBox="0 0 8 5"><path d="M0.5 0.5h7L4 4.5z" fill="#222"/></svg>
<svg class="a" style="left:43.5px;top:98px" width="8" height="5" viewBox="0 0 8 5"><path d="M0.5 0.5h7L4 4.5z" fill="#222"/></svg>
<svg class="a" style="left:824.5px;top:98px" width="8" height="5" viewBox="0 0 8 5"><path d="M0.5 0.5h7L4 4.5z" fill="#222"/></svg>
<div class="sep" style="left:119px;top:51px;height:27px"></div>
<div class="sep" style="left:218px;top:51px;height:27px"></div>
<div class="sep" style="left:348px;top:51px;height:27px"></div>
<div class="sep" style="left:416px;top:51px;height:27px"></div>
<div class="sep" style="left:546px;top:51px;height:27px"></div>
<div class="sep" style="left:645px;top:51px;height:27px"></div>
<div class="sep" style="left:536px;top:87px;height:27px"></div>
<div class="sep" style="left:728px;top:87px;height:27px"></div>
<div class="a" style="left:212px;top:85px;width:257px;height:29px;background:#fff;border:1px solid #95a2c4;box-sizing:border-box"></div>
<svg class="ic" style="left:214px;top:87px;width:24px;height:24px" viewBox="0 0 24 24"><rect x="4.500" y="0.500" width="17" height="22" rx="1.200" fill="#fff" stroke="#444" stroke-width="1.100"/><rect x="1.700" y="3.500" width="16" height="16" rx="1.200" fill="#fff" stroke="#444" stroke-width="1.100"/><rect x="3.3" y="5.2" width="12.8" height="12.7" fill="#f0cd90"/><path d="M3.3 11.8L7.27 7.99L12.52 13.33L16.1 10.03V17.9H3.3Z" fill="#fff"/><path d="M3.3 11.55L7.27 7.74L12.52 13.07L16.1 9.77" fill="none" stroke="#3f7fc4" stroke-width="1.100"/><path d="M3.3 13.71L7.27 9.9L12.52 15.23L16.1 11.93V17.9H3.3Z" fill="#8ecab2"/></svg>
<div class="t " style="left:239px;top:91.5px;letter-spacing:-0.216px;">Слой с дефектами</div>
<div class="a" style="left:403px;top:88px;width:25px;height:23px;background:#e8eef7"></div>
<div class="a" style="left:430px;top:88px;width:25px;height:23px;background:#e8eef7"></div>
<svg class="ic" style="left:405px;top:89px;width:22px;height:22px" viewBox="0 0 24 24"><text x="1" y="17.500" font-family="Liberation Sans, sans-serif" font-weight="bold" font-size="19" fill="#c6c6ca" stroke="#c6c6ca" stroke-width="0.900">G</text><circle cx="18.500" cy="18.500" r="4.800" fill="#d2d2d6" stroke="#e8eef7" stroke-width="0.800"/><path d="M16 18.500h5" stroke="#f4f4f6" stroke-width="1.500"/></svg>
<svg class="ic" style="left:432px;top:88px;width:23px;height:23px" viewBox="0 0 24 24"><path d="M0.12 23.34L5.86 22.51L24.53 4.39L19.79 -0.49L1.13 17.63Z" fill="#fff" opacity="0.85"/><path d="M1.20 22.30L5.03 21.65L21.18 5.97L18.12 2.81L1.96 18.49Z" fill="#2a5fa8"/><path d="M21.75 5.41L23.33 3.88L20.27 0.72L18.69 2.25Z" fill="#2a5fa8"/></svg>
<svg class="a" style="left:457.5px;top:98px" width="8" height="5" viewBox="0 0 8 5"><path d="M0.5 0.5h7L4 4.5z" fill="#222"/></svg>
<div class="a" style="left:0;top:117px;width:1280px;height:25px;background:#e8eef7"></div>
<div class="grip" style="left:4px;top:119px;width:29px;height:5px"></div>
<div class="a" style="left:35px;top:117px;width:167px;height:25px;background:#bccdd6"></div>
<div class="t " style="left:38px;top:121.5px;letter-spacing:-0.153px;color:#5a6670;">Учет аварийных работ *</div>
<svg class="a" style="left:183px;top:124px" width="12" height="12" viewBox="0 0 12 12"><path d="M1.500 1.500l9 9M10.500 1.500l-9 9" stroke="#56666c" stroke-width="1.500" fill="none"/></svg>
<svg class="a" style="left:1262px;top:126px" width="10" height="9" viewBox="0 0 10 9"><rect x="0.800" y="0" width="8.200" height="2" fill="#000"/><path d="M0.800 3.600h8.200L4.900 8z" fill="#000"/></svg>
<div class="a" style="left:35px;top:141px;width:1244px;height:3px;background:linear-gradient(#bfd0da 0,#bfd0da 66%,#a9b4bb 67%)"></div>
<div class="a" style="left:36px;top:144px;width:1242px;height:1px;background:#6e6868"></div>
<div class="a" style="left:35px;top:144px;width:1px;height:603px;background:#aaacb2"></div><div class="a" style="left:36px;top:144px;width:1px;height:603px;background:#6a6264"></div>
<div class="panel" style="left:1px;top:117px;width:34px;height:630px"></div>
<div class="grip" style="left:4px;top:119px;width:29px;height:5px"></div>
<div class="a" style="left:2px;top:501px;width:32px;height:31px;background:#bcd3e7"></div>
<svg class="ic" style="left:5px;top:131px;width:24px;height:24px" viewBox="0 0 24 24"><path d="M5 2.500H20.800L11.500 15.500Z" fill="#c8402a"/><path d="M3 3.500L13.300 23.300" stroke="#666" stroke-width="1.800"/></svg>
<svg class="ic" style="left:5px;top:163px;width:24px;height:24px" viewBox="0 0 24 24"><path d="M5.700 1.500H20L11.800 12.500Z" fill="#b9b9b9"/><path d="M1.500 2.500L11.500 22M3.500 2.500L13 20.500" stroke="#b4b4b4" stroke-width="1.300"/><circle cx="17.900" cy="17.700" r="5.400" fill="#a2a2a6" stroke="#e8eef7" stroke-width="0.800"/><path d="M14.900 17.700h6" stroke="#e8e6e0" stroke-width="1.800"/></svg>
<svg class="ic" style="left:5px;top:194px;width:24px;height:24px" viewBox="0 0 24 24"><path d="M7.20 2.00 L7.20 19.30 L11.20 15.20 L14.00 21.80 L16.70 20.60 L13.90 14.20 L19.00 13.50Z" fill="#333"/></svg>
<svg class="ic" style="left:5px;top:226px;width:24px;height:24px" viewBox="0 0 24 24"><rect x="2.500" y="1" width="19.500" height="18.500" fill="none" stroke="#333" stroke-width="1" stroke-dasharray="2.500 1.500"/><path d="M10.00 5.20 L10.00 20.77 L13.60 17.08 L16.12 23.02 L18.55 21.94 L16.03 16.18 L20.62 15.55Z" fill="#333"/></svg>
<svg class="ic" style="left:5px;top:257px;width:24px;height:24px" viewBox="0 0 24 24"><circle cx="11.900" cy="10" r="9.700" fill="none" stroke="#333" stroke-width="1" stroke-dasharray="2.500 1.500"/><path d="M10.00 5.30 L10.00 20.87 L13.60 17.18 L16.12 23.12 L18.55 22.04 L16.03 16.28 L20.62 15.65Z" fill="#333"/></svg>
<svg class="ic" style="left:5px;top:288px;width:24px;height:24px" viewBox="0 0 24 24"><path d="M10 1.500L22 10V19.400H2.500V7.200Z" fill="none" stroke="#333" stroke-width="1" stroke-dasharray="2.500 1.500"/><path d="M10.00 5.00 L10.00 20.57 L13.60 16.88 L16.12 22.82 L18.55 21.74 L16.03 15.98 L20.62 15.35Z" fill="#333"/></svg>
<svg class="ic" style="left:5px;top:319px;width:24px;height:24px" viewBox="0 0 24 24"><rect x="1.500" y="0.500" width="21" height="21" fill="#fff" stroke="#555" stroke-width="1"/><rect x="1" y="0" width="22" height="4.600" fill="#2e6db4"/><path d="M16.200 10a4.600 4.600 0 0 0-8.300 0.500M7.600 14.500a4.600 4.600 0 0 0 8.300-0.500" fill="none" stroke="#1f9060" stroke-width="1.700"/><path d="M17.500 6.500v4.500h-4.500zM6.300 18v-4.500h4.500z" fill="#1f9060"/></svg>
<svg class="ic" style="left:5px;top:349px;width:24px;height:24px" viewBox="0 0 24 24"><rect x="1.500" y="0.500" width="21" height="21" fill="#fff" stroke="#555" stroke-width="1"/><rect x="1" y="0" width="22" height="4.600" fill="#2e6db4"/><path d="M5 7h4.2l-1.4 -1.4l2.3 0z" fill="none"/><path d="M5 7H9.5L5 11.5Z" fill="#2e6db4"/><path d="M6.5 8.5L10.2 12.2" stroke="#2e6db4" stroke-width="1.500"/><path d="M19 7h-4.2l1.4 -1.4l-2.3 0z" fill="none"/><path d="M19 7H14.5L19 11.5Z" fill="#2e6db4"/><path d="M17.5 8.5L13.8 12.2" stroke="#2e6db4" stroke-width="1.500"/><path d="M5 19.5h4.2l-1.4 1.4l2.3 0z" fill="none"/><path d="M5 19.5H9.5L5 15.0Z" fill="#2e6db4"/><path d="M6.5 18.0L10.2 14.3" stroke="#2e6db4" stroke-width="1.500"/><path d="M19 19.5h-4.2l1.4 1.4l-2.3 0z" fill="none"/><path d="M19 19.5H14.5L19 15.0Z" fill="#2e6db4"/><path d="M17.5 18.0L13.8 14.3" stroke="#2e6db4" stroke-width="1.500"/></svg>
<svg class="ic" style="left:5px;top:380px;width:24px;height:24px" viewBox="0 0 24 24"><circle cx="10.500" cy="10.200" r="8.800" fill="none" stroke="#555" stroke-width="3"/><path d="M17 16.700l6 5.800" stroke="#555" stroke-width="3.600" stroke-linecap="round"/><path d="M5.500 10.200h10" stroke="#2e6db4" stroke-width="2.600"/><path d="M10.500 5.200v10" stroke="#2e6db4" stroke-width="2.600"/></svg>
<svg class="ic" style="left:5px;top:411px;width:24px;height:24px" viewBox="0 0 24 24"><circle cx="10.500" cy="10.200" r="8.800" fill="none" stroke="#555" stroke-width="3"/><path d="M17 16.700l6 5.800" stroke="#555" stroke-width="3.600" stroke-linecap="round"/><path d="M5.500 10.200h10" stroke="#2e6db4" stroke-width="2.600"/></svg>
<svg class="ic" style="left:5px;top:442px;width:24px;height:24px" viewBox="0 0 24 24"><rect x="1" y="4.200" width="22" height="15.800" fill="#e8b252"/><path d="M1.500 4.200V20M1 4.700H23" stroke="#555" stroke-width="1" fill="none"/><path d="M4.500 20v-2.500M8 20v-3.500M11.500 20v-2.500M15 20v-3.500M18.500 20v-2.500M21.800 20v-3.500" stroke="#555" stroke-width="0.900"/><text x="8" y="14.500" text-anchor="middle" font-family="Liberation Sans, sans-serif" font-size="9" fill="#444">1</text><text x="17.500" y="14.500" text-anchor="middle" font-family="Liberation Sans, sans-serif" font-size="9" fill="#444">2</text></svg>
<svg class="ic" style="left:5px;top:473px;width:24px;height:24px" viewBox="0 0 24 24"><g fill="#e8b252"><rect x="8.200" y="2" width="2.900" height="13" rx="1.450"/><rect x="11.400" y="0.700" width="2.900" height="14" rx="1.450"/><rect x="14.600" y="1.500" width="2.900" height="13" rx="1.450"/><rect x="17.800" y="4" width="2.900" height="11" rx="1.450"/><path d="M8.200 10h12.500v6q0 8-6.500 8q-4 0-6.500-4l-5-6.500q-0.800-1.500 0.500-2.300q1.300-0.500 2.300 0.600l3.200 3.400z"/></g></svg>
<svg class="ic" style="left:5px;top:504px;width:24px;height:24px" viewBox="0 0 24 24"><circle cx="11.900" cy="12.700" r="11.800" fill="#2a6ab5"/><rect x="10.200" y="9.800" width="3.400" height="10.700" fill="#fff"/><circle cx="11.900" cy="6.200" r="2" fill="#fff"/></svg>
<svg class="a" style="left:37px;top:145px" width="1241" height="602" viewBox="37 145 1241 602"><rect x="37" y="145" width="1241" height="602" fill="#fff"/><polygon points="30.0,140.0 304.4,145.0 334.8,243.7 37.0,354.5 30.0,357.0" fill="#f0e8d0" stroke="#dfaa5c" stroke-width="1"/><polygon points="30.0,411.0 158.0,363.2 400.0,273.0 560.0,578.0 97.4,752.0 30.0,752.0" fill="#f0e8d0" stroke="#dfaa5c" stroke-width="1"/><polygon points="373.0,746.0 373.5,744.0 1100.0,744.0 1100.0,640.0 1137.4,653.0 1175.2,745.0 1176.0,760.0 373.0,760.0" fill="#f0e8d0" stroke="#dfaa5c" stroke-width="1"/><polygon points="347.5,140.0 594.4,145.6 560.0,155.6 420.0,196.0 365.0,196.0" fill="#f0e8d0" stroke="#dfaa5c" stroke-width="1"/><polygon points="739.7,145.6 1023.2,145.3 1030.0,166.0 700.0,166.0 703.8,158.0" fill="#f0e8d0" stroke="#dfaa5c" stroke-width="1"/><polygon points="1024.7,140.0 1290.0,140.0 1290.0,334.0 1276.5,339.1 1221.0,358.7 1187.9,344.2 1110.5,309.9 1070.0,292.0" fill="#f0e8d0" stroke="#dfaa5c" stroke-width="1"/><polygon points="1290.0,400.0 1276.8,404.6 1222.2,423.7 1170.6,539.0 1241.3,737.3 1249.0,760.0 1290.0,760.0" fill="#f0e8d0" stroke="#dfaa5c" stroke-width="1"/><polygon points="53.2,280.3 83.3,269.3 88.8,282.2 99.2,278.1 95.1,264.4 140.7,247.2 151.7,276.7 106.6,293.7 104.4,291.2 93.7,295.3 101.6,316.4 70.5,328.7" fill="#dfadad" stroke="#d98d92" stroke-width="0.9"/><polygon points="136.6,398.8 165.0,389.0 165.0,436.5 151.7,441.2" fill="#dfadad" stroke="#d98d92" stroke-width="0.9"/><polygon points="30.0,658.0 36.8,676.7 47.8,705.4 81.4,693.7 73.2,670.4 115.6,652.9 123.8,675.9 157.0,663.5 146.2,631.1 165.0,625.0 165.0,682.3 30.0,733.2" fill="#dfadad" stroke="#d98d92" stroke-width="0.9"/><polygon points="177.0,140.0 232.0,140.0 235.0,148.0 208.0,158.0 190.0,163.0 183.0,163.0" fill="#dfadad" stroke="#d98d92" stroke-width="0.9"/><polygon points="266.0,158.0 274.5,155.0 277.0,163.0 268.0,163.0" fill="#dfadad" stroke="#d98d92" stroke-width="0.9"/><polygon points="345.5,140.0 377.5,140.0 385.5,163.0 352.5,163.0" fill="#dfadad" stroke="#d98d92" stroke-width="0.9"/><polygon points="463.0,152.0 483.0,145.0 500.0,140.0 556.0,140.0 560.0,151.0 530.0,165.0 468.0,165.0" fill="#dfadad" stroke="#d98d92" stroke-width="0.9"/><polygon points="726.0,156.0 754.0,145.0 768.0,140.0 836.5,140.0 833.0,150.0 800.0,159.5 780.0,166.0 729.0,166.0" fill="#dfadad" stroke="#d98d92" stroke-width="0.9"/><polygon points="914.5,140.0 945.8,140.0 956.5,165.0 925.7,165.0" fill="#dfadad" stroke="#d98d92" stroke-width="0.9"/><polygon points="1022.5,140.0 1052.7,140.0 1063.0,165.0 1031.0,165.0" fill="#dfadad" stroke="#d98d92" stroke-width="0.9"/><polygon points="1117.7,140.0 1158.3,247.5 1210.3,227.6 1197.8,196.4 1167.2,207.7 1151.8,163.8 1215.0,140.0" fill="#dfadad" stroke="#d98d92" stroke-width="0.9"/><polygon points="1243.5,140.0 1254.8,163.8 1273.5,156.3 1266.5,140.0" fill="#dfadad" stroke="#d98d92" stroke-width="0.9"/><polygon points="1090.0,267.5 1129.3,285.3 1185.9,311.8 1186.7,316.5 1207.4,309.9 1217.1,335.2 1193.7,344.2 1188.0,344.2 1090.0,300.8" fill="#dfadad" stroke="#d98d92" stroke-width="0.9"/><polygon points="1237.4,314.5 1248.4,310.6 1249.5,313.8 1290.0,299.0 1290.0,328.4 1260.1,339.9 1259.3,343.0 1250.3,346.2" fill="#dfadad" stroke="#d98d92" stroke-width="0.9"/><polygon points="1225.0,425.0 1248.1,418.2 1257.2,445.6 1236.7,453.8 1239.0,458.3 1203.9,533.1 1199.4,532.2 1206.2,555.0 1179.8,564.1 1170.6,541.3 1172.0,536.7" fill="#dfadad" stroke="#d98d92" stroke-width="0.9"/><polygon points="1192.5,596.9 1220.8,586.9 1257.2,687.1 1229.9,697.2" fill="#dfadad" stroke="#d98d92" stroke-width="0.9"/><polygon points="1237.6,722.7 1264.1,713.6 1281.0,760.0 1251.0,760.0" fill="#dfadad" stroke="#d98d92" stroke-width="0.9"/><polygon points="1100.0,556.0 1111.4,582.3 1137.4,653.0 1100.0,667.0" fill="#dfadad" stroke="#d98d92" stroke-width="0.9"/><polygon points="1126.4,695.4 1152.4,686.2 1180.0,760.0 1152.0,760.0 1134.2,719.0 1130.0,719.0 1128.5,709.0" fill="#dfadad" stroke="#d98d92" stroke-width="0.9"/><polygon points="418.7,745.0 443.7,744.0 446.0,760.0 420.0,760.0" fill="#dfadad" stroke="#d98d92" stroke-width="0.9"/><polygon points="1065.0,745.0 1107.0,740.0 1112.0,760.0 1068.0,760.0" fill="#dfadad" stroke="#d98d92" stroke-width="0.9"/><path d="M39.6 444.7 L128.4 409.7 L138.8 439.8 L50.5 473.4Z M56.8 447.2 L118.9 423.4 L123.0 437.1 L60.6 459.5Z" fill="#dfadad" fill-rule="evenodd" stroke="#d98d92" stroke-width="0.8"/><text x="0" y="0" transform="translate(317,147) rotate(65)" font-family="Liberation Sans, sans-serif" font-weight="bold" font-size="24" fill="#808080">ст</text><text x="0" y="0" transform="translate(574,191) rotate(-19)" font-family="Liberation Sans, sans-serif" font-weight="bold" font-size="33" fill="#808080">Пушкинская</text><path d="M795 150L800 160" stroke="#2a62d8" stroke-width="2"/><circle cx="795" cy="150" r="4.500" fill="#10c0a0" stroke="#0a6a5a" stroke-width="1"/><path d="M149 420L160 417" stroke="#2a62d8" stroke-width="2"/><circle cx="160.500" cy="414" r="5" fill="#fff" stroke="#111" stroke-width="1"/><path d="M137 415a3.500 2.200 0 0 1 7 0z" fill="#f07070" stroke="#e03030" stroke-width="0.600"/><rect x="131.500" y="415.500" width="17" height="13" fill="#3060f0" stroke="#000" stroke-width="1"/><path d="M330 746v-2h4M347 746v-2h-4" stroke="#1030e0" stroke-width="1.500" fill="none"/><rect x="337" y="744" width="3" height="2" fill="#90b020"/></svg>
<div class="a" style="left:0;top:747px;width:1280px;height:18px;background:#f0f0f0;border-top:1px solid #fafafa"></div>
<div class="a" style="left:0;top:765px;width:1280px;height:3px;background:#000"></div>
<div class="a" style="left:341px;top:765px;width:49px;height:3px;background:#5a5a5a"></div>
<div class="t " style="left:3px;top:750.5px;letter-spacing:-0.163px;">Готов</div>
<div class="sep" style="left:899px;top:749px;height:16px;background:#d0d0d0"></div>
<div class="sep" style="left:971px;top:749px;height:16px;background:#d0d0d0"></div>
<div class="sep" style="left:1154px;top:749px;height:16px;background:#d0d0d0"></div>
<div class="sep" style="left:1238px;top:749px;height:16px;background:#d0d0d0"></div>
<div class="t " style="left:979px;top:750.5px;color:#222">X:</div>
<div class="t " style="left:998.5px;top:750.5px;letter-spacing:-0.497px;color:#222">5619.20 м</div>
<div class="t " style="left:1056px;top:750.5px;color:#222">Y:</div>
<div class="t " style="left:1074px;top:750.5px;letter-spacing:-0.385px;color:#222">9527.59 м</div>
<div class="t " style="left:1164px;top:750.5px;letter-spacing:-0.529px;color:#222">М1:1863</div>
<div class="a" style="left:158px;top:159px;width:953px;height:585px;background:#f0f0f0;border:1px solid #2f86dd;box-sizing:border-box"></div>
<div class="a" style="left:159px;top:160px;width:951px;height:30px;background:#fff"></div>
<svg class="ic" style="left:167px;top:165px;width:17px;height:17px" viewBox="0 0 24 24"><rect x="0.700" y="1" width="11" height="8.500" fill="#fff" stroke="#777" stroke-width="1.100"/><rect x="0.200" y="0.300" width="12" height="2.200" fill="#3aa078"/><path d="M2.500 5h3M7 5h3M2.500 7.500h3" stroke="#555" stroke-width="1.200"/><path d="M22.500 2.500h-7.500l-5 7h5l-3.500 5.500l11-8.500h-5z" fill="#f29a28"/><text x="11.500" y="23.500" text-anchor="middle" font-family="Liberation Sans, sans-serif" font-weight="bold" font-size="11.500" fill="#111" letter-spacing="-0.800">SQL</text></svg>
<div class="t " style="left:188.5px;top:167px;letter-spacing:-0.442px;">SQL запрос</div>
<svg class="a" style="left:980px;top:160px" width="130" height="30" viewBox="0 0 130 30"><g fill="none" stroke="#111" stroke-width="1"><path d="M11 14.500h10"/><path d="M56.500 9.500h9v9h-9z"/><path d="M102 9l10 10M112 9l-10 10"/></g></svg>
<div class="a" style="left:159px;top:190px;width:951px;height:36px;background:#f7f7f7"></div>
<div class="grip" style="left:162px;top:193px;width:5px;height:29px"></div>
<div class="t " style="left:175.5px;top:199.5px;letter-spacing:-0.329px;">Файл</div>
<svg class="a" style="left:210px;top:206px" width="8" height="5" viewBox="0 0 8 5"><path d="M0.5 0.5h7L4 4.5z" fill="#333"/></svg>
<div class="sep" style="left:223px;top:194px;height:27px;background:#d0d0d0"></div>
<svg class="ic" style="left:229px;top:195px;width:24px;height:24px" viewBox="0 0 24 24"><path d="M6.5 1.5H17.5L23.5 7.5V23.5H6.5Z" fill="#e4edf8" stroke="#2e6db4" stroke-width="1" stroke-linejoin="round"/><path d="M17.5 1.5V7.5H23.5" fill="none" stroke="#2e6db4" stroke-width="1"/><path d="M0.30 5.40L10.30 5.40M1.76 1.86L8.84 8.94M5.30 0.40L5.30 10.40M8.84 1.86L1.76 8.94" stroke="#eba53a" stroke-width="1.3" fill="none"/><circle cx="5.3" cy="5.4" r="1.300" fill="#fff" stroke="#eba53a" stroke-width="0.800"/></svg>
<svg class="ic" style="left:260px;top:195px;width:24px;height:24px" viewBox="0 0 24 24"><path d="M0.500 4h8.500l3.800 3.500v4.500h-8l-4.300 11.500z" fill="#6d6d6d"/><path d="M4.300 11.500h18.600l-2.700 12.100h-18.400z" fill="#e8b252"/><circle cx="17.900" cy="5.800" r="5.600" fill="#3aa76d"/><path d="M15.300 3.300l4.600 4.600M20.300 4.300v4h-4" stroke="#fff" stroke-width="1.500" fill="none"/></svg>
<svg class="ic" style="left:290px;top:195px;width:24px;height:24px" viewBox="0 0 24 24"><path d="M2.200 1h21.800v22.200h-18.800l-3-3z" fill="#8d48ac"/><rect x="5" y="3.500" width="16" height="9.500" rx="1.500" fill="#fff"/><path d="M7.500 6h11M7.500 8.200h11M7.500 10.400h11" stroke="#c4c2b8" stroke-width="0.900"/><path d="M7 16.200h12v6.100h-12z" fill="#fff"/><rect x="10.200" y="17.200" width="2.800" height="5.100" fill="#8d48ac"/></svg>
<div class="sep" style="left:322px;top:194px;height:27px;background:#d0d0d0"></div>
<svg class="ic" style="left:326px;top:195px;width:24px;height:24px" viewBox="0 0 24 24"><path d="M23.200 1H13L4 11.400H11.800L4.500 22.300L20.900 8.800H13.900Z" fill="#e8a845"/></svg>
<div class="t " style="left:355px;top:199.5px;letter-spacing:0.042px;">Выполнить</div>
<div class="a" style="left:162px;top:228px;width:744px;height:172px;background:#fff;border:1px solid #a3a3bd;box-sizing:border-box"></div>
<div class="t mono" style="left:167px;top:231px;"><span style="color:#0000ff">SELECT</span> [Внутренний диаметр трубы, м] <span style="color:#0000ff">AS</span> &quot;Диаметр&quot;,</div>
<div class="a" style="left:167px;top:246px;width:1px;height:16px;background:#000"></div>
<div class="a" style="left:162px;top:405px;width:744px;height:19px;background:#deded6;border:1px solid #a9a9a9;box-sizing:border-box"></div>
<div class="a" style="left:166px;top:408px;width:40px;height:16px;background:#fff;border:1px solid #b4b4ac;border-bottom:none;border-radius:3px 3px 0 0;box-sizing:border-box"></div>
<div class="t ms" style="left:170.5px;top:408px;letter-spacing:-0.122px;">Ответ</div>
<div class="a" style="left:162px;top:425px;width:744px;height:317px;background:#fff;border:1px solid #a3a3bd;box-sizing:border-box"></div>
<div class="a" style="left:889px;top:426px;width:16px;height:315px;background:#f4f4f4"></div>
<svg class="a" style="left:889px;top:427px" width="16" height="313" viewBox="0 0 16 313"><path d="M4 10l3.800-3.800 3.800 3.800M4 302.500l3.800 3.800 3.800-3.800" fill="none" stroke="#b6b2ae" stroke-width="1.900"/></svg>
<div class="t ms" style="left:909.5px;top:227px;letter-spacing:-0.002px;">Источник:</div>
<div class="a" style="left:909px;top:242px;width:198px;height:24px;background:#fff;border:1px solid #7a7a7a;box-sizing:border-box"></div>
<svg class="ic" style="left:912px;top:246px;width:16px;height:16px" viewBox="0 0 24 24"><path d="M3 2.500h13l5 5v14h-18z" fill="#dce8f8" stroke="#5a8ac8" stroke-width="1.200"/><circle cx="11" cy="12.500" r="8" fill="#3cb040"/><circle cx="9" cy="10" r="3.500" fill="#9ae890" opacity="0.800"/><circle cx="11" cy="12.500" r="8" fill="none" stroke="#2a62b8" stroke-width="1.300"/></svg>
<div class="t ms" style="left:932px;top:246px;letter-spacing:-0.066px;">Учет аварийных работ</div>
<svg class="a" style="left:1092px;top:251px" width="11" height="7" viewBox="0 0 11 7"><path d="M1 1l4.500 4.500L10 1" fill="none" stroke="#444" stroke-width="1.100"/></svg>
<svg class="ic" style="left:911px;top:271px;width:16px;height:16px" viewBox="0 0 24 24"><circle cx="14" cy="9.500" r="6.200" fill="#fff" stroke="#2a5fa8" stroke-width="3.300"/><path d="M9.500 14.500L3.500 21" stroke="#2a5fa8" stroke-width="4.200" stroke-linecap="round"/></svg>
<div class="a" style="left:929px;top:269px;width:154px;height:20px;background:#fff;border:1px solid #7a7a7a;box-sizing:border-box"></div>
<div class="a" style="left:1087px;top:270px;width:19px;height:19px;background:#cfcfcf;border:1px solid #bdbdbd;box-sizing:border-box"></div>
<svg class="a" style="left:1091px;top:274px" width="11" height="11" viewBox="0 0 11 11"><path d="M1.500 1.500l8 8M9.500 1.500l-8 8" stroke="#d8705c" stroke-width="2" fill="none"/></svg>
<div class="a" style="left:909px;top:292px;width:198px;height:450px;background:#fff;border:1px solid #828790;box-sizing:border-box"></div>
<svg class="a" style="left:919px;top:298px" width="9" height="9" viewBox="0 0 9 9"><rect x="0.500" y="0.500" width="8" height="8" fill="#fff" stroke="#919191"/><path d="M2 4.500h5M4.500 2v5" stroke="#2a3a8a" stroke-width="1"/></svg>
<svg class="ic" style="left:933px;top:294px;width:16px;height:16px" viewBox="0 0 24 24"><rect x="6" y="1" width="15" height="19" rx="1.500" fill="#eaf2fc" stroke="#3a78c0" stroke-width="1.500"/><rect x="2.500" y="4" width="15" height="19" rx="1.500" fill="#fff" stroke="#3a78c0" stroke-width="1.500"/><rect x="4.500" y="6.500" width="11" height="14" fill="#f2d490"/><path d="M4.500 15l3.500-4 3 3 4.500-4.500v11h-11z" fill="#a4d4bc"/><path d="M4.500 13.500l3.500-4 3 3 4.500-4.500" fill="none" stroke="#5a9ad0" stroke-width="1"/></svg>
<div class="t ms" style="left:951px;top:293.5px;letter-spacing:0.064px;">Кварталы</div>
<svg class="a" style="left:919px;top:314px" width="9" height="9" viewBox="0 0 9 9"><rect x="0.500" y="0.500" width="8" height="8" fill="#fff" stroke="#919191"/><path d="M2 4.500h5M4.500 2v5" stroke="#2a3a8a" stroke-width="1"/></svg>
<svg class="ic" style="left:933px;top:310px;width:16px;height:16px" viewBox="0 0 24 24"><rect x="6" y="1" width="15" height="19" rx="1.500" fill="#eaf2fc" stroke="#3a78c0" stroke-width="1.500"/><rect x="2.500" y="4" width="15" height="19" rx="1.500" fill="#fff" stroke="#3a78c0" stroke-width="1.500"/><rect x="4.500" y="6.500" width="11" height="14" fill="#f2d490"/><path d="M4.500 15l3.500-4 3 3 4.500-4.500v11h-11z" fill="#a4d4bc"/><path d="M4.500 13.500l3.500-4 3 3 4.500-4.500" fill="none" stroke="#5a9ad0" stroke-width="1"/></svg>
<div class="t ms" style="left:951px;top:309.5px;letter-spacing:-0.033px;">Надписи</div>
<svg class="a" style="left:919px;top:330px" width="9" height="9" viewBox="0 0 9 9"><rect x="0.500" y="0.500" width="8" height="8" fill="#fff" stroke="#919191"/><path d="M2 4.500h5M4.500 2v5" stroke="#2a3a8a" stroke-width="1"/></svg>
<svg class="ic" style="left:933px;top:326px;width:16px;height:16px" viewBox="0 0 24 24"><rect x="6" y="1" width="15" height="19" rx="1.500" fill="#eaf2fc" stroke="#3a78c0" stroke-width="1.500"/><rect x="2.500" y="4" width="15" height="19" rx="1.500" fill="#fff" stroke="#3a78c0" stroke-width="1.500"/><rect x="4.500" y="6.500" width="11" height="14" fill="#f2d490"/><path d="M4.500 15l3.500-4 3 3 4.500-4.500v11h-11z" fill="#a4d4bc"/><path d="M4.500 13.500l3.500-4 3 3 4.500-4.500" fill="none" stroke="#5a9ad0" stroke-width="1"/></svg>
<div class="t ms" style="left:951px;top:325.5px;letter-spacing:-0.060px;">Здания</div>
<svg class="a" style="left:919px;top:346px" width="9" height="9" viewBox="0 0 9 9"><rect x="0.500" y="0.500" width="8" height="8" fill="#fff" stroke="#919191"/><path d="M2 4.500h5M4.500 2v5" stroke="#2a3a8a" stroke-width="1"/></svg>
<svg class="ic" style="left:933px;top:342px;width:16px;height:16px" viewBox="0 0 24 24"><rect x="6" y="1" width="15" height="19" rx="1.500" fill="#eaf2fc" stroke="#3a78c0" stroke-width="1.500"/><rect x="2.500" y="4" width="15" height="19" rx="1.500" fill="#fff" stroke="#3a78c0" stroke-width="1.500"/><rect x="4.500" y="6.500" width="11" height="14" fill="#f2d490"/><path d="M4.500 15l3.500-4 3 3 4.500-4.500v11h-11z" fill="#a4d4bc"/><path d="M4.500 13.500l3.500-4 3 3 4.500-4.500" fill="none" stroke="#5a9ad0" stroke-width="1"/></svg>
<div class="t ms" style="left:951px;top:341.5px;letter-spacing:0.017px;">Пример тепловой сети</div>
<svg class="a" style="left:919px;top:362px" width="9" height="9" viewBox="0 0 9 9"><rect x="0.500" y="0.500" width="8" height="8" fill="#fff" stroke="#919191"/><path d="M2 4.500h5M4.500 2v5" stroke="#2a3a8a" stroke-width="1"/></svg>
<svg class="ic" style="left:933px;top:358px;width:16px;height:16px" viewBox="0 0 24 24"><rect x="6" y="1" width="15" height="19" rx="1.500" fill="#eaf2fc" stroke="#3a78c0" stroke-width="1.500"/><rect x="2.500" y="4" width="15" height="19" rx="1.500" fill="#fff" stroke="#3a78c0" stroke-width="1.500"/><rect x="4.500" y="6.500" width="11" height="14" fill="#f2d490"/><path d="M4.500 15l3.500-4 3 3 4.500-4.500v11h-11z" fill="#a4d4bc"/><path d="M4.500 13.500l3.500-4 3 3 4.500-4.500" fill="none" stroke="#5a9ad0" stroke-width="1"/></svg>
<div class="t ms" style="left:951px;top:357.5px;letter-spacing:-0.048px;">Пример водопроводной сети</div>
<svg class="a" style="left:919px;top:378px" width="9" height="9" viewBox="0 0 9 9"><rect x="0.500" y="0.500" width="8" height="8" fill="#fff" stroke="#919191"/><path d="M2 4.500h5M4.500 2v5" stroke="#2a3a8a" stroke-width="1"/></svg>
<svg class="ic" style="left:933px;top:374px;width:16px;height:16px" viewBox="0 0 24 24"><rect x="6" y="1" width="15" height="19" rx="1.500" fill="#eaf2fc" stroke="#3a78c0" stroke-width="1.500"/><rect x="2.500" y="4" width="15" height="19" rx="1.500" fill="#fff" stroke="#3a78c0" stroke-width="1.500"/><rect x="4.500" y="6.500" width="11" height="14" fill="#f2d490"/><path d="M4.500 15l3.500-4 3 3 4.500-4.500v11h-11z" fill="#a4d4bc"/><path d="M4.500 13.500l3.500-4 3 3 4.500-4.500" fill="none" stroke="#5a9ad0" stroke-width="1"/></svg>
<div class="t ms" style="left:951px;top:373.5px;letter-spacing:-0.109px;">Слой с дефектами</div>
</body></html>
